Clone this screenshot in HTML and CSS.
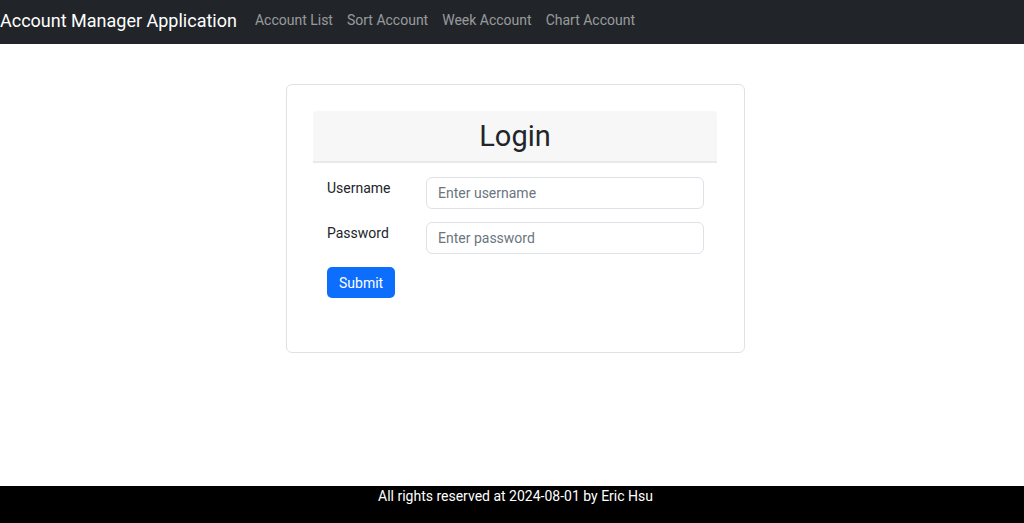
FILE: index.html
```html
<!DOCTYPE html>
<html lang="en">
<head>
<meta charset="UTF-8" />
<meta name="viewport" content="width=device-width, initial-scale=1" />
<title>Account Manager Application</title>
<link rel="stylesheet" href="styles.css">
</head>
<body>

<nav class="navbar">
  <a class="navbar-brand" href="#">Account Manager Application</a>
  <ul class="nav-links">
    <li><a href="#">Account List</a></li>
    <li><a href="#">Sort Account</a></li>
    <li><a href="#">Week Account</a></li>
    <li><a href="#">Chart Account</a></li>
  </ul>
</nav>

<main class="page">
  <div class="login-card">
    <div class="login-header">
      <h2>Login</h2>
    </div>
    <form id="loginForm" class="login-form">
      <div class="form-row">
        <label for="username">Username</label>
        <input type="text" id="username" placeholder="Enter username" />
      </div>
      <div class="form-row">
        <label for="password">Password</label>
        <input type="password" id="password" placeholder="Enter password" />
      </div>
      <button type="submit">Submit</button>
    </form>
  </div>
</main>

<footer class="footer">
  All rights reserved at 2024-08-01 by Eric Hsu
</footer>

</body>
</html>
```

FILE: styles.css
```css
body {
  font-family: Roboto, Arial, sans-serif;
  font-size: 14px;
  line-height: 1.5;
  color: #212529;
  background-color: #fff;
  margin: 0;
  padding: 0;
  min-height: 100vh;
}

.navbar {
  background-color: #212529;
  height: 44px;
  display: flex;
  align-items: center;
  padding-bottom: 3px;
  box-sizing: border-box;
}

.navbar-brand {
  color: #fff;
  font-size: 18px;
  text-decoration: none;
  margin-right: 18px;
}

.nav-links {
  display: flex;
  list-style: none;
  margin: 0;
  padding: 0;
  gap: 14px;
}

.nav-links a {
  color: rgba(255, 255, 255, 0.55);
  text-decoration: none;
}

.page {
  display: flex;
  justify-content: center;
  padding: 40px 0 0 7px;
}

.login-card {
  width: 459px;
  box-sizing: border-box;
  border: 1px solid #dee2e6;
  border-radius: 6px;
  padding: 26px 27px 54px 26px;
}

.login-header {
  background-color: #f7f7f7;
  border-bottom: 2px solid #e9e9e9;
  border-radius: 4px 4px 0 0;
  height: 52px;
  box-sizing: border-box;
  display: flex;
  align-items: center;
  justify-content: center;
}

.login-header h2 {
  margin: 0;
  font-size: 29px;
  font-weight: 400;
  line-height: 1.2;
}

.login-form {
  padding: 14px 13px 0 14px;
}

.form-row {
  display: flex;
  margin-bottom: 13px;
}

.form-row label {
  width: 99px;
  flex-shrink: 0;
  line-height: 22px;
}

.form-row input {
  flex: 1;
  height: 32px;
  box-sizing: border-box;
  padding: 4px 11px;
  font-family: inherit;
  font-size: 14px;
  color: #212529;
  border: 1px solid #dee2e6;
  border-radius: 6px;
}

.form-row input::placeholder {
  color: #6c757d;
}

.login-form button {
  height: 31px;
  padding: 0 12px;
  background-color: #0d6efd;
  color: #fff;
  border: none;
  border-radius: 5px;
  font-family: inherit;
  font-size: 14px;
  cursor: pointer;
}

.login-form button:hover {
  background-color: #0b5ed7;
}

.footer {
  position: fixed;
  left: 0;
  right: 0;
  bottom: 0;
  height: 37px;
  background-color: #000;
  color: #fff;
  text-align: center;
  line-height: 20px;
  padding-left: 7px;
}
```
